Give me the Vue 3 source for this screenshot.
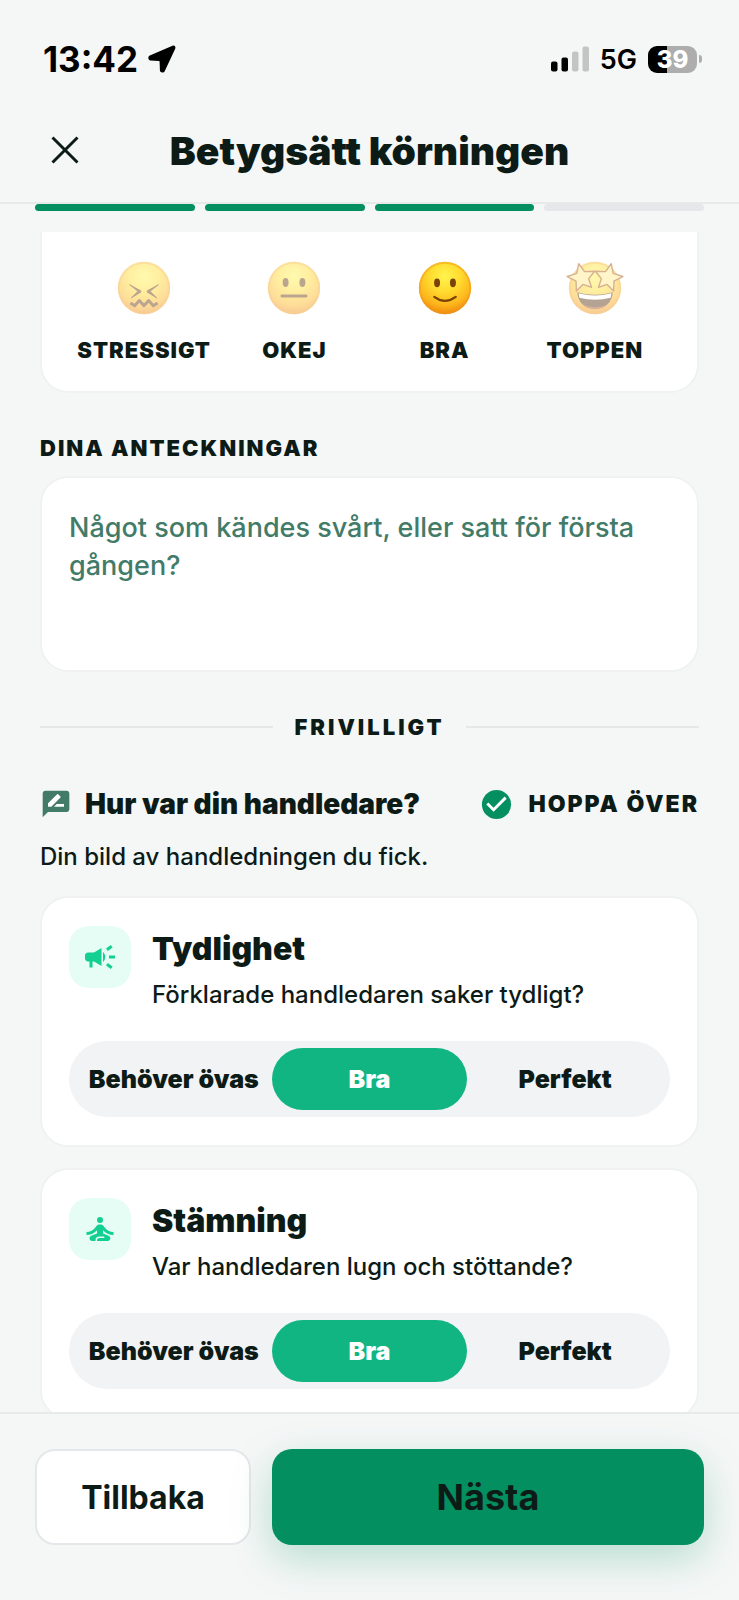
<template>
  <div class="screen">
    <header class="top">
      <div class="status-bar">
        <div class="status-left">
          <span class="clock">13:42</span>
          <svg class="location" viewBox="0 0 28 28" aria-hidden="true">
            <path
              d="M24.5.7 1.8 10.6C-.4 11.7-.1 15.2 2.3 15.5l8.6.5c.5 0 .7.3.7.8l.3 8.4c.2 2.6 3.8 3 4.9.7L27.2 3.7C28 1.5 26.5 0 24.5.7z" />
          </svg>
        </div>
        <div class="status-right">
          <svg class="signal" viewBox="0 0 38 26" aria-hidden="true">
            <rect x="0" y="15.5" width="6.5" height="10" rx="2" />
            <rect x="10.500" y="11.5" width="6.5" height="14" rx="2" />
            <rect class="off" x="21" y="5.5" width="6.5" height="20" rx="2" />
            <rect class="off" x="31.5" y="0.5" width="6.5" height="25" rx="2" />
          </svg>
          <span class="network">5G</span>
          <div class="battery"><span class="battery-level">39</span></div>
        </div>
      </div>

      <div class="app-bar">
        <button class="close" type="button" aria-label="Stäng">
          <svg viewBox="0 0 28 28" aria-hidden="true">
            <path d="M1.5 1.5l25 25M26.5 1.5l-25 25" />
          </svg>
        </button>
        <h1 class="title">Betygsätt körningen</h1>
      </div>

      <div class="progress">
        <span v-for="step in 4" :key="step" :class="['step', { done: step <= 3 }]"></span>
      </div>
    </header>

    <main class="content">
      <div class="mood-card">
        <label v-for="mood in moods" :key="mood.id" :class="['mood', { selected: selectedMood === mood.id }]">
          <input v-model="selectedMood" class="hidden-input" type="radio" name="mood" :value="mood.id" />
          <svg class="emoji" viewBox="0 0 60 60" aria-hidden="true">
            <defs>
              <radialGradient :id="'face-' + mood.id" cx="50%" cy="28%" r="74%">
                <stop offset="0" stop-color="#fff44f" />
                <stop offset="0.4" stop-color="#ffdb2e" />
                <stop offset="0.75" stop-color="#fdb41c" />
                <stop offset="1" stop-color="#ec820c" />
              </radialGradient>
            </defs>
            <circle cx="30" cy="30" r="28" :fill="`url(#face-${mood.id})`" />
            <circle cx="30" cy="30" r="27" fill="none" stroke="#f09a1c" stroke-width="2" stroke-opacity="0.5" />
            <g v-if="mood.id === 'stressed'">
              <path d="M14.5 26.5l12 6.5v1.5l-10 6 7-7zM45.5 26.5l-12 6.5v1.5l10 6-7-7z" fill="#6b3a0a" stroke="#6b3a0a" stroke-linejoin="round" />
              <path d="M15.5 46l4.5 3 5-5.5 5 5.5 5-5.5 5 5.5 4.5-3" fill="none" stroke="#6b3a0a" stroke-width="3.2" stroke-linejoin="round" />
            </g>
            <g v-else-if="mood.id === 'okay'" fill="#6b3a0a">
              <ellipse cx="21" cy="24" rx="3.2" ry="4.8" />
              <ellipse cx="39" cy="24" rx="3.2" ry="4.8" />
              <rect x="15.5" y="37" width="29" height="3.2" rx="1.5" />
            </g>
            <g v-else-if="mood.id === 'good'">
              <ellipse cx="21.5" cy="24.5" rx="3.2" ry="4.8" fill="#7a4206" />
              <ellipse cx="38.5" cy="24.5" rx="3.2" ry="4.8" fill="#7a4206" />
              <path d="M18.5 39.5q11.5 8.5 23 0" fill="none" stroke="#7a4206" stroke-width="2.4" stroke-linecap="round" />
            </g>
            <g v-else>
              <path d="M11 34.5q19 5.5 38 0c-1 24-37 24-38 0z" fill="#5b3410" />
              <path d="M12.5 35.5q17.5 5 35 0l-.7 5q-16.8 4-33.6 0z" fill="#fff" />
              <path d="M17 48q13 5 26 0-13 8.5-26 0z" fill="#b5532f" />
              <g fill="#ffeb8a" stroke="#a9550f" stroke-width="1.5" stroke-linejoin="round">
                <path :d="star" />
                <path :d="star" transform="translate(60 0) scale(-1 1)" />
              </g>
            </g>
          </svg>
          <span class="mood-label">{{ mood.label }}</span>
        </label>
      </div>

      <label class="notes-label" for="notes">DINA ANTECKNINGAR</label>
      <textarea id="notes" v-model="notes" class="notes" placeholder="Något som kändes svårt, eller satt för första gången?"></textarea>

      <div class="divider"><span>FRIVILLIGT</span></div>

      <div class="section-head">
        <svg class="review-icon" viewBox="0 0 24 24" aria-hidden="true">
          <path fill="#437b69" d="M20 2H4c-1.1 0-1.99.9-1.99 2L2 22l4-4h14c1.1 0 2-.9 2-2V4c0-1.1-.9-2-2-2z" />
          <path fill="#fff" d="M6 14v-2.47l6.88-6.88c.2-.2.51-.2.71 0l1.77 1.77c.2.2.2.51 0 .71L8.47 14H6zm12 0h-7.5l2-2H18v2z" />
        </svg>
        <h2>Hur var din handledare?</h2>
        <button class="skip" type="button">
          <svg viewBox="0 0 24 24" aria-hidden="true">
            <circle cx="12" cy="12" r="10" fill="#038f60" />
            <path fill="#fff" d="M10 17l-5-5 1.41-1.41L10 14.17l7.59-7.59L19 8l-9 9z" />
          </svg>
          <span>HOPPA ÖVER</span>
        </button>
      </div>
      <p class="section-text">Din bild av handledningen du fick.</p>

      <section v-for="question in questions" :key="question.id" class="question-card">
        <div class="question-head">
          <div class="question-icon">
            <svg viewBox="0 0 24 24" aria-hidden="true"><path :d="question.icon" /></svg>
          </div>
          <div>
            <h3>{{ question.title }}</h3>
            <p>{{ question.text }}</p>
          </div>
        </div>
        <div class="segments">
          <label v-for="option in options" :key="option" :class="['segment', { active: question.answer === option }]">
            <input v-model="question.answer" class="hidden-input" type="radio" :name="question.id" :value="option" />
            <span>{{ option }}</span>
          </label>
        </div>
      </section>
    </main>

    <footer class="actions">
      <button class="back" type="button">Tillbaka</button>
      <button class="next" type="button">Nästa</button>
    </footer>
  </div>
</template>

<script setup>
import { ref } from 'vue';

const selectedMood = ref('good');
const notes = ref('');

const moods = [
  { id: 'stressed', label: 'STRESSIGT' },
  { id: 'okay', label: 'OKEJ' },
  { id: 'good', label: 'BRA' },
  { id: 'great', label: 'TOPPEN' },
];

const options = ['Behöver övas', 'Bra', 'Perfekt'];

const questions = ref([
  {
    id: 'clarity',
    title: 'Tydlighet',
    text: 'Förklarade handledaren saker tydligt?',
    answer: 'Bra',
    icon: 'M18 11v2h4v-2h-4zM16 17.61c.96.71 2.21 1.65 3.2 2.39.4-.53.8-1.07 1.2-1.6-.99-.74-2.24-1.68-3.2-2.4-.4.54-.8 1.08-1.2 1.61zM20.4 5.6c-.4-.53-.8-1.07-1.2-1.6-.99.74-2.24 1.68-3.2 2.4.4.53.8 1.07 1.2 1.6.96-.72 2.21-1.65 3.2-2.4zM4 9c-1.1 0-2 .9-2 2v2c0 1.1.9 2 2 2h1v4h2v-4h1l5 3V6L8 9H4zM15.5 12c0-1.33-.58-2.53-1.5-3.35v6.69c.92-.81 1.5-2.01 1.5-3.34z',
  },
  {
    id: 'mood',
    title: 'Stämning',
    text: 'Var handledaren lugn och stöttande?',
    answer: 'Bra',
    icon: 'M12 4a2 2 0 1 0 0 4a2 2 0 1 0 0-4zM21 16v-2c-2.24 0-4.16-.96-5.6-2.68l-1.34-1.6A1.98 1.98 0 0 0 12.53 9h-1.05c-.61 0-1.17.26-1.55.72l-1.34 1.6C7.16 13.04 5.24 14 3 14v2c2.77 0 5.19-1.17 7-3.25V15l-3.88 1.55c-.67.27-1.12.93-1.12 1.66C5 19.2 5.8 20 6.79 20H9v-.5a2.5 2.5 0 0 1 2.5-2.5h3c.28 0 .5.22.5.5s-.22.5-.5.5h-3c-.83 0-1.5.67-1.5 1.5v.5h7.1c.99 0 1.79-.8 1.79-1.79 0-.73-.45-1.39-1.12-1.66L14 15v-2.25c1.81 2.08 4.23 3.25 7 3.25z',
  },
]);

const star = 'M12.6 4l6.2 8.5 10.8-.5-6.4 8 3 9.2-9.2-3-7 7-.3-10.5-9.5-5 10.3-3.3z';
</script>

<style>
body {
  margin: 0;
  background: #f5f7f7;
}
</style>

<style scoped>
* {
  box-sizing: border-box;
}

.screen {
  display: flex;
  flex-direction: column;
  height: 100vh;
  background: #f5f7f7;
  color: #0d1b17;
  font-family: Inter, "Liberation Sans", sans-serif;
}

h1,
h2,
h3,
p {
  margin: 0;
}

button {
  padding: 0;
  border: 0;
  background: none;
  color: inherit;
  font-family: inherit;
  cursor: pointer;
}

svg {
  display: block;
  flex: none;
}

.hidden-input {
  position: absolute;
  opacity: 0;
  width: 1px;
  height: 1px;
  margin: 0;
}

.status-bar {
  display: flex;
  align-items: center;
  justify-content: space-between;
  padding: 37px 37px 17px 43px;
  color: #000;
}

.status-left,
.status-right {
  display: flex;
  align-items: center;
  height: 44px;
}

.status-left {
  gap: 10px;
}

.status-right {
  gap: 11px;
}

.clock {
  font-size: 35px;
  font-weight: 700;
}

.location {
  width: 28px;
  height: 28px;
}

.signal {
  width: 38px;
  height: 26px;
}

.signal .off {
  fill: #c3c5c5;
}

.network {
  font-size: 27px;
  font-weight: 600;
}

.battery {
  display: flex;
  align-items: center;
}

.battery::after {
  content: "";
  width: 3px;
  height: 8px;
  margin-left: 2px;
  border-radius: 0 4px 4px 0;
  background: #adadad;
}

.battery-level {
  width: 49px;
  height: 27px;
  border-radius: 9px;
  background: linear-gradient(to right, #000 39%, #adadad 39%);
  color: #fff;
  font-size: 24px;
  font-weight: 800;
  line-height: 27px;
  text-align: center;
}

.app-bar {
  display: grid;
  grid-template-columns: 60px 1fr 60px;
  align-items: center;
  min-height: 106px;
  padding: 0 35px;
  border-bottom: 2px solid #e8eaea;
}

.close {
  display: grid;
  place-items: center;
  width: 60px;
  height: 60px;
}

.close svg {
  width: 28px;
  height: 28px;
  fill: none;
  stroke: #0d1b17;
  stroke-width: 3;
}

.title {
  font-size: 39px;
  font-weight: 900;
  text-align: center;
  white-space: nowrap;
}

.progress {
  display: flex;
  gap: 10px;
  padding: 0 35px 21px;
}

.step {
  flex: 1;
  height: 7px;
  border-radius: 4px;
  background: #e5e7ea;
}

.step.done {
  background: #038f60;
}

.content {
  flex: 1;
  min-height: 0;
  overflow-y: auto;
  padding: 0 40px;
  scrollbar-width: none;
}

.mood-card {
  display: grid;
  grid-template-columns: repeat(4, 1fr);
  padding: 28px 27px 27px;
  border: 2px solid #f0f2f2;
  border-top: 0;
  border-radius: 0 0 28px 28px;
  background: #fff;
}

.mood {
  display: flex;
  flex-direction: column;
  align-items: center;
  gap: 20px;
  position: relative;
  cursor: pointer;
}

.emoji {
  width: 56px;
  height: 56px;
  overflow: visible;
  opacity: 0.45;
}

.mood.selected .emoji {
  opacity: 1;
}

.mood-label,
.notes-label,
.divider,
.skip {
  font-size: 22px;
  font-weight: 900;
  line-height: 28px;
}

.mood-label {
  letter-spacing: 1px;
}

.notes-label {
  display: block;
  margin: 41px 0 14px;
  letter-spacing: 2px;
}

.notes {
  display: block;
  width: 100%;
  height: 196px;
  padding: 31px 27px;
  border: 2px solid #f0f2f2;
  border-radius: 28px;
  outline: none;
  background: #fff;
  color: #0d1b17;
  font-family: inherit;
  font-size: 27px;
  font-weight: 500;
  line-height: 38px;
  resize: none;
}

.notes::placeholder {
  color: #437b69;
  opacity: 1;
}

.divider {
  display: flex;
  align-items: center;
  gap: 21px;
  margin: 41px 0 45px;
  letter-spacing: 3px;
}

.divider::before,
.divider::after {
  content: "";
  flex: 1;
  height: 2px;
  background: #e5e8e8;
}

.section-head {
  display: flex;
  align-items: center;
  height: 36px;
}

.review-icon {
  width: 32px;
  height: 32px;
  margin-right: 13px;
}

h2 {
  font-size: 28px;
  font-weight: 900;
  line-height: 36px;
}

.skip {
  display: flex;
  align-items: center;
  gap: 14px;
  margin-left: auto;
  font-size: 23px;
  letter-spacing: 2px;
  white-space: nowrap;
}

.skip svg {
  width: 35px;
  height: 35px;
}

.section-text,
.question-head p {
  font-size: 24px;
  font-weight: 500;
  line-height: 30px;
}

.section-text {
  margin: 20px 0 24px;
}

.question-card {
  margin-bottom: 21px;
  padding: 28px 27px;
  border: 2px solid #f0f2f2;
  border-radius: 28px;
  background: #fff;
}

.question-head {
  display: flex;
  gap: 21px;
}

.question-icon {
  display: grid;
  place-items: center;
  width: 62px;
  height: 62px;
  border-radius: 20px;
  background: #e6fdf5;
}

.question-icon svg {
  width: 36px;
  height: 36px;
  fill: #13cf92;
}

h3 {
  font-size: 32px;
  font-weight: 900;
  line-height: 46px;
}

.question-head p {
  margin-top: 8px;
}

.segments {
  display: grid;
  grid-template-columns: repeat(3, 1fr);
  margin-top: 31px;
  padding: 7px;
  border-radius: 38px;
  background: #f2f3f5;
}

.segment {
  display: grid;
  place-items: center;
  position: relative;
  height: 62px;
  border-radius: 31px;
  font-size: 25px;
  font-weight: 900;
  white-space: nowrap;
  cursor: pointer;
}

.segment.active {
  background: #11b581;
  color: #fff;
}

.actions {
  display: grid;
  grid-template-columns: 1fr 2fr;
  gap: 21px;
  padding: 35px 35px 55px;
  border-top: 2px solid #e8eaea;
}

.back,
.next {
  height: 96px;
  border-radius: 20px;
}

.back {
  border: 2px solid #e5e7ea;
  background: #fff;
  font-size: 32px;
  font-weight: 700;
}

.next {
  background: #038f60;
  box-shadow: 0 14px 40px rgba(3, 143, 96, 0.25);
  font-size: 36px;
  font-weight: 700;
}
</style>
